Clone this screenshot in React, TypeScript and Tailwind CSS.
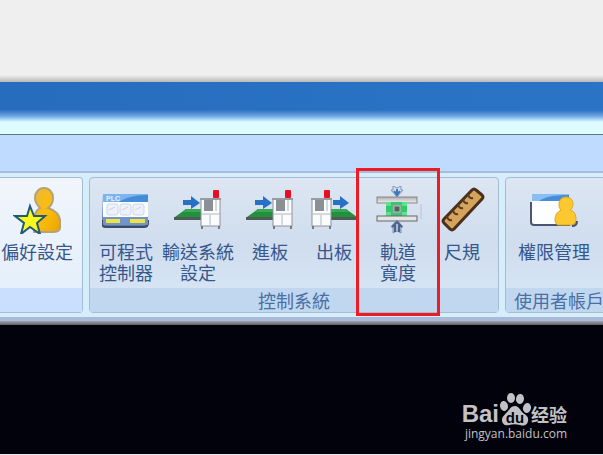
import React from "react";
import clsx from "clsx";

const FavoriteIcon = () => (
  <svg viewBox="0 0 48 48" className="h-12 w-12" aria-hidden="true">
    <defs>
      <linearGradient id="gold" x1="0" y1="0" x2="1" y2="1">
        <stop offset="0" stopColor="#e8b93a" />
        <stop offset="0.5" stopColor="#fdbd0c" />
        <stop offset="1" stopColor="#e9a400" />
      </linearGradient>
    </defs>
    <path
      d="M21 46V34c0-6 3-10 6-12-3-3-5-6-5-10 0-6 4-10 9-10s9 4 9 10c0 4-2 8-5 10 7 2 12 7 12 13v7c0 3-4 4-8 4z"
      fill="url(#gold)"
      stroke="#b3a27a"
      strokeWidth="2"
    />
    <path
      d="M17 20l4 10h11l-8 7 3 11-10-7-9 7 3-11-9-7h12z"
      fill="#fbf81c"
      stroke="#215a7c"
      strokeWidth="2"
    />
  </svg>
);

const PlcIcon = () => (
  <svg viewBox="0 0 48 48" className="h-12 w-12" aria-hidden="true">
    <path d="M1 8h45v29q0 4-4 4H4q-4 0-4-4z" fill="#5578ad" />
    <path d="M0 34v3q0 4 4 4h38q4 0 4-4v-3" fill="none" stroke="#434b64" strokeWidth="2" />
    <rect x="1" y="8" width="45" height="8" fill="#7db4ee" />
    <path d="M17 16c6-4 15-7 29-7v7z" fill="#448bd8" />
    <text x="4" y="15" fontSize="7" fontWeight="bold" fill="#e4f1fd" fontFamily="Liberation Sans, sans-serif">
      PLC
    </text>
    <rect x="1" y="16" width="45" height="15" fill="#fdfeff" />
    <g fill="#edf2fa" stroke="#cbd7e9" strokeWidth="1">
      <rect x="5" y="18" width="11" height="11" rx="2" />
      <rect x="18" y="18" width="11" height="11" rx="2" />
      <rect x="31" y="18" width="11" height="11" rx="2" />
    </g>
    <path d="M7 24l6-3M20 24l6-3M33 24l6-3" stroke="#c5d2e6" />
    <rect x="1" y="31" width="45" height="8" rx="1" fill="#7195ca" />
    <rect x="4" y="33" width="14" height="4" fill="#ede345" />
    <rect x="28" y="33" width="15" height="4" fill="#ede345" />
  </svg>
);

const Machine = ({ x, lamp }: { x: number; lamp: number }) => (
  <g>
    <rect x={lamp} y="4" width="6" height="8" rx="1" fill="#ea0d22" />
    <rect x={x} y="13" width="19" height="27" fill="#fafbfd" stroke="#8f9298" strokeWidth="1" />
    <path d={`M${x - 1} 13h21`} stroke="#969aa1" strokeWidth="2" />
    <rect x={x + 3} y="14" width="9" height="11" fill="#8b8f96" />
    <path d={`M${x} 28h19M${x + 9} 29v10M${x + 15} 14v11`} stroke="#b3b6bc" fill="none" />
    <path d={`M${x + 1} 40v3M${x + 18} 40v3`} stroke="#777b82" strokeWidth="2" />
  </g>
);

const LoadIcon = () => (
  <svg viewBox="0 0 48 48" className="h-12 w-12" aria-hidden="true">
    <path d="M1 31l11-8h15v8z" fill="#22903c" />
    <path d="M12 23h15v3H9z" fill="#3aa853" />
    <path d="M0 31h27v3H0z" fill="#4c5d57" />
    <path d="M9 14h8v-4l9 7-9 6v-4H9z" fill="#2770c4" />
    <Machine x={27} lamp={39} />
  </svg>
);

const UnloadIcon = () => (
  <svg viewBox="0 0 48 48" className="h-12 w-12" aria-hidden="true">
    <path d="M20 23h16l11 8H20z" fill="#22903c" />
    <path d="M20 23h16l3 3H20z" fill="#3aa853" />
    <path d="M20 31h28v3H20z" fill="#4c5d57" />
    <path d="M23 14h7v-4l9 7-9 6v-4h-7z" fill="#2770c4" />
    <Machine x={2} lamp={14} />
  </svg>
);

const TrackIcon = () => (
  <svg viewBox="0 0 48 48" className="h-12 w-12" aria-hidden="true">
    <defs>
      <linearGradient id="rail" x1="0" y1="0" x2="0" y2="1">
        <stop offset="0" stopColor="#b0b0b0" />
        <stop offset="1" stopColor="#eeeeee" />
      </linearGradient>
    </defs>
    <rect x="3" y="11" width="40" height="6" fill="url(#rail)" stroke="#878787" />
    <rect x="12" y="16" width="21" height="14" fill="#32c96d" />
    <path d="M12 16h5v4h-5zM28 16h5v4h-5zM12 26h5v4h-5zM28 26h5v4h-5z" fill="#5fdf91" />
    <rect x="18" y="18" width="10" height="10" fill="#64af85" />
    <rect x="20" y="20" width="6" height="6" fill="#555f60" stroke="#a9c9b5" />
    <rect x="3" y="30" width="40" height="5" fill="#e4e4e4" stroke="#666666" />
    <g stroke="#8795ab" strokeWidth="1">
      <path d="M19 0l4 2 4-2v4h2l-6 7-6-7h2z" fill="#d5e0f0" />
      <path d="M19 47l4-2 4 2v-6h2l-6-7-6 7h2z" fill="#a9bbd8" />
    </g>
    <path d="M23 3v6M20 5l3 4 3-4" stroke="#3a77c2" strokeWidth="2" fill="none" />
    <path d="M21 46v-7M25 46v-7M18 41l5-5 5 5" stroke="#4c638f" strokeWidth="2" fill="none" />
    <path d="M47 18v15" stroke="#b6c2d3" />
  </svg>
);

const RulerIcon = () => (
  <svg viewBox="0 0 48 48" className="h-12 w-12" aria-hidden="true">
    <path
      d="M34 4q2-2 4 0l6 5q2 2 0 4L16 43q-2 2-4 0l-6-6q-2-2 0-4z"
      fill="#d5a45c"
      stroke="#4a2f1c"
      strokeWidth="3"
      strokeLinejoin="round"
    />
    <path
      d="M9 30q1 5 5 4M15 24q1 5 5 4M20 18q1 5 5 4M25 13q1 5 5 4M30 8q1 5 5 4"
      stroke="#5a3a20"
      strokeWidth="2"
      fill="none"
    />
  </svg>
);

const PermissionIcon = () => (
  <svg viewBox="0 0 48 48" className="h-12 w-12" aria-hidden="true">
    <path d="M2 8h37v32H4q-3 0-3-3z" fill="#fdfeff" />
    <path d="M1 16v20q0 3 3 3h36" fill="none" stroke="#4b5471" strokeWidth="2" />
    <rect x="2" y="8" width="37" height="7" fill="#8abdf2" />
    <path d="M9 15c6-4 14-6 30-6v6z" fill="#468ddb" />
    <path
      d="M28 39q-3-1-3-5c0-5 2-8 6-10-2-2-2-3-2-6 0-4 3-7 7-7s7 3 7 7c0 2-1 5-3 6 4 1 6 4 6 10q0 4-4 5z"
      fill="#fbc92f"
      stroke="#e0a620"
      strokeWidth="1"
    />
    <path d="M42 40q5 0 5-5" stroke="#4e5269" strokeWidth="2" fill="none" />
  </svg>
);

const PawLogo = () => (
  <svg viewBox="0 0 32 34" className="h-[34px] w-8" aria-hidden="true">
    <g fill="#c2c2c6">
      <ellipse cx="5" cy="14" rx="4" ry="5" transform="rotate(-12 5 14)" />
      <ellipse cx="12" cy="6" rx="4" ry="5" />
      <ellipse cx="21" cy="7" rx="4" ry="5" transform="rotate(8 21 7)" />
      <ellipse cx="28" cy="16" rx="4" ry="5" transform="rotate(12 28 16)" />
      <path d="M16 14c4 0 5 4 8 7 3 2 6 4 5 8-1 5-5 5-8 4-4-1-7-1-11 0-4 1-7-1-7-5 0-4 4-6 6-9 2-2 3-5 7-5z" />
    </g>
    <text
      x="16"
      y="31"
      textAnchor="middle"
      fontSize="15"
      fontWeight="bold"
      fill="#02020c"
      fontFamily="Liberation Sans, sans-serif"
    >
      du
    </text>
  </svg>
);

type ToolButtonProps = {
  icon: React.ReactNode;
  lines: string[];
  className: string;
  highlighted?: boolean;
};

const ToolButton = ({ icon, lines, className, highlighted }: ToolButtonProps) => (
  <button
    type="button"
    className={clsx("relative flex shrink-0 flex-col items-center gap-[7px] pt-2 pb-[5px]", className)}
  >
    {icon}
    <span className="flex min-h-[42px] flex-col items-center text-lg leading-[21px] whitespace-nowrap">
      {lines.map((line) => (
        <span key={line}>{line}</span>
      ))}
    </span>
    {/* Red frame round the active tool */}
    {highlighted && (
      <span className="pointer-events-none absolute -inset-x-2.5 -top-2.5 z-10 h-[148px] border-3 border-[#ed1c24]" />
    )}
  </button>
);

const Ribbon = () => (
  <nav className="flex gap-1.5 border-t-2 border-[#a5bedb] bg-[#d6edfb] pt-1 pb-1">
    {/* Preferences */}
    <section className="flex w-[83px] shrink-0 flex-col rounded-r border border-l-0 border-[#a4bbd2] bg-linear-to-b from-[#f1f5fb] to-[#e2eefb]">
      <ToolButton icon={<FavoriteIcon />} lines={["偏好設定"]} className="w-[74px]" />
      <div className="h-6 bg-[#c9dffd]" />
    </section>

    {/* Control system */}
    <section className="flex shrink-0 flex-col rounded border border-[#a4bbd2] bg-linear-to-b from-[#dde6f2] via-[#cfddee] to-[#d9e8f7]">
      <div className="flex gap-1 pr-1">
        <div className="flex">
          <ToolButton icon={<PlcIcon />} lines={["可程式", "控制器"]} className="w-18" />
          <ToolButton icon={<LoadIcon />} lines={["輸送系統", "設定"]} className="w-18" />
        </div>
        <div className="flex">
          <ToolButton icon={<LoadIcon />} lines={["進板"]} className="w-16" />
          <ToolButton icon={<UnloadIcon />} lines={["出板"]} className="w-16" />
          <ToolButton icon={<TrackIcon />} lines={["軌道", "寬度"]} className="w-16" highlighted />
          <ToolButton icon={<RulerIcon />} lines={["尺規"]} className="w-16" />
        </div>
      </div>
      <h2 className="h-6 bg-[#c0d7ef] text-center text-lg leading-6 text-[#4a6fa5]">控制系統</h2>
    </section>

    {/* User accounts */}
    <section className="flex min-w-[108px] flex-1 flex-col rounded border border-[#a4bbd2] bg-linear-to-b from-[#dde6f2] via-[#cfddee] to-[#d9e8f7]">
      <ToolButton icon={<PermissionIcon />} lines={["權限管理"]} className="w-24" />
      <h2 className="h-6 bg-[#c0d7ef] text-center text-lg leading-6 whitespace-nowrap text-[#4a6fa5]">
        使用者帳戶
      </h2>
    </section>
  </nav>
);

const App = () => {
  return (
    <div className="flex min-h-screen flex-col overflow-hidden bg-[#02020c] font-['Noto_Sans_CJK_TC',sans-serif] text-[#36578c]">
      <div className="h-[75px] bg-[#efefef]" />
      <div className="h-[7px] bg-linear-to-b from-[#efefef] to-[#b9b9b9]" />

      {/* Title bar */}
      <header>
        <div className="h-7 bg-linear-to-r from-[#276dbe] to-[#2b74c5]" />
        <div className="h-3 bg-linear-to-b from-[#2b70c0] via-[#6ea6e3] to-[#dcfaff]" />
        <div className="h-[13px] border-b border-[#5c7a8c] bg-[#defcff]" />
        <div className="h-9 bg-[#bfdbff]" />
      </header>

      <Ribbon />

      <div className="h-1 bg-[#a9bad8]" />
      <div className="h-1 bg-linear-to-b from-[#a3a5b3] to-[#5f5e66]" />

      {/* Work area */}
      <main className="flex flex-1 flex-col items-end justify-end border-b border-[#e8e8ea] pr-9 pb-3 text-[#c2c2c6]">
        <a href="#jingyan" className="flex flex-col items-end">
          <span className="flex items-end">
            <span className="font-['Liberation_Sans',sans-serif] text-2xl leading-6 font-bold">Bai</span>
            <PawLogo />
            <span className="font-['Noto_Sans_CJK_SC',sans-serif] text-lg leading-6 font-bold">经验</span>
          </span>
          <span className="font-['Open_Sans',sans-serif] text-xs leading-4 font-medium">jingyan.baidu.com</span>
        </a>
      </main>
    </div>
  );
};

export default App;
